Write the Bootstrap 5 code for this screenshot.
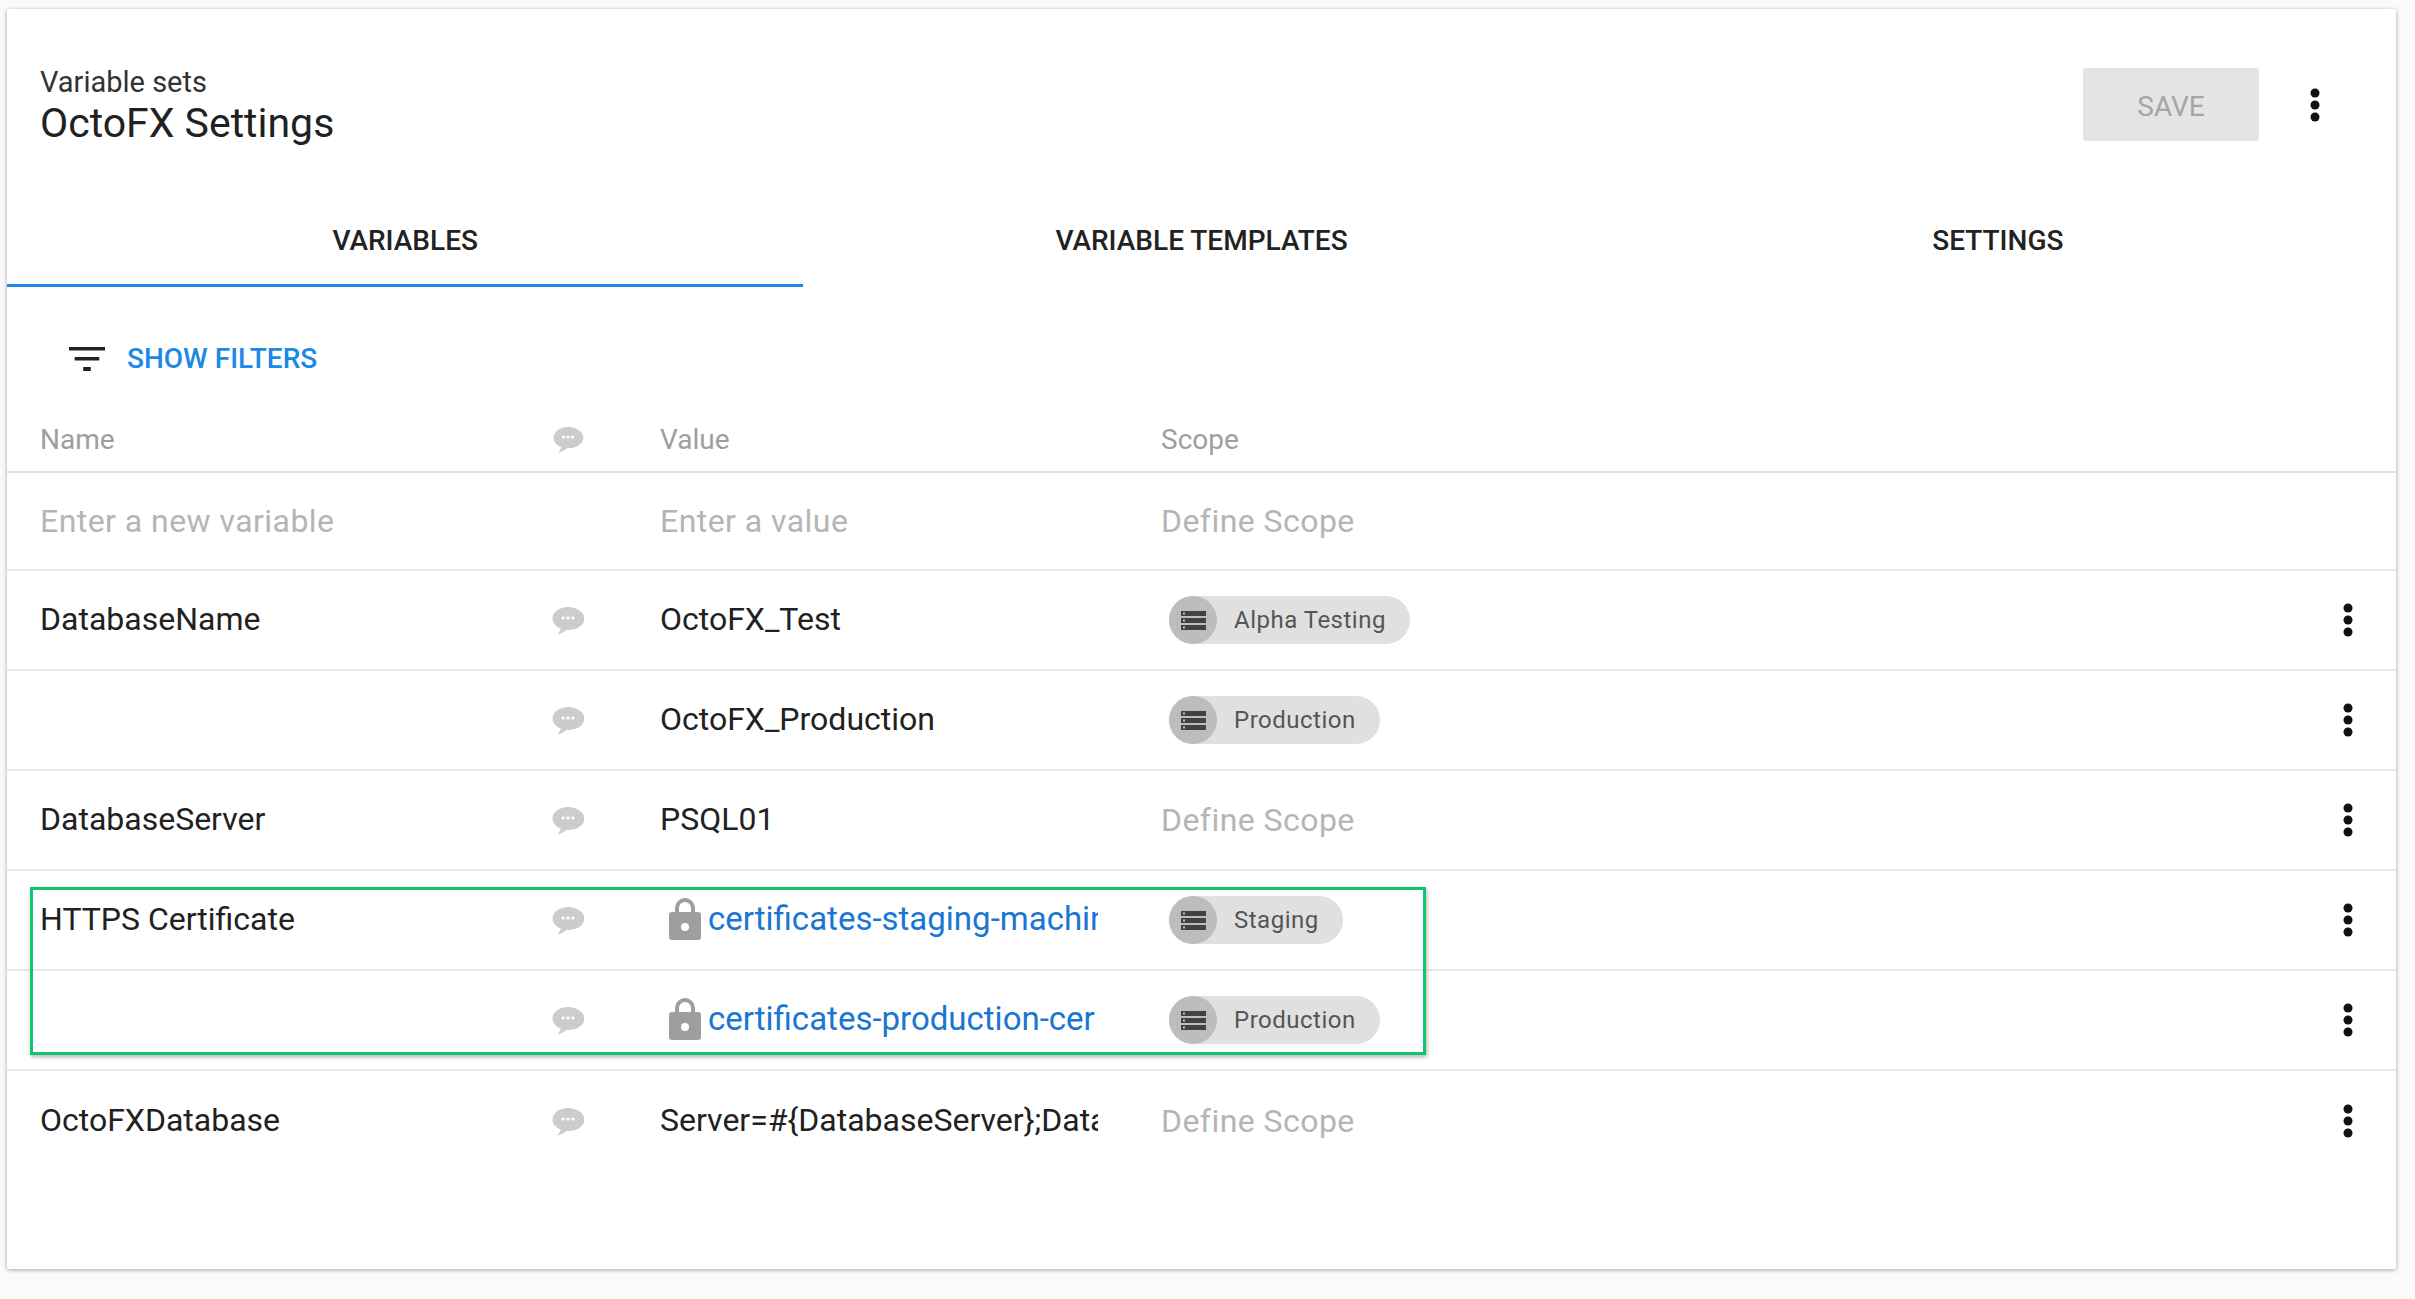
<!doctype html>
<html lang="en"><head><meta charset="utf-8"><title>OctoFX Settings</title>
<link href="https://cdn.jsdelivr.net/npm/bootstrap@5.3.0/dist/css/bootstrap.min.css" rel="stylesheet">
<style>
html,body{height:100%}
body{background:#fafafa;font-family:Roboto,"Liberation Sans",sans-serif;color:#212121;padding:9px 19px 30px 7px;overflow:hidden}
.vs-panel{position:relative;background:#fff;height:1260px;box-shadow:0 1px 4px rgba(0,0,0,.35);border-radius:2px}
.vs-head{height:198px;padding:55px 0 0 33px}
.vs-crumb{font-size:29px;line-height:36px;color:#333}
.vs-title{font-size:41px;line-height:46px;color:#212121}
.vs-save{width:176px;height:73px;margin-top:4px;padding-top:10px;background:#e4e4e4;border:0;border-radius:3px;color:#a5a5a5;font-size:28px;opacity:1}
.vs-save:disabled{background:#e4e4e4;color:#a5a5a5;opacity:1}
.vs-kebab{fill:#111;display:block}
.vs-headmenu{margin:0 69px 0 44px;width:24px}
.vs-tab{height:80px;padding-bottom:9px;color:#222;font-size:28px;font-weight:500;display:flex;align-items:center;justify-content:center;text-decoration:none;border-bottom:3px solid transparent;flex:1 1 0}
.vs-tab.on{border-bottom-color:#1e88e5}
.vs-filter{height:115px;padding:51px 0 0 62px;gap:22px}
.vs-filter span{color:#1e88e5;font-size:28px;line-height:42px;font-weight:500}
.vs-row{height:100px;border-bottom:2px solid #e8e8e8;font-size:32px;line-height:40px}
.vs-row.hd{height:71px;padding-top:7px;font-size:28px;color:#9e9e9e;border-bottom-color:#e0e0e0}
.vs-row.new{height:98px}
.vs-row:not(.hd):not(.new) .c-name,.vs-row:not(.hd):not(.new) .c-val{padding-bottom:2px}
.vs-row:not(.hd) .c-note{padding-top:2px}
.c-name{width:545px;padding-left:33px;flex:none}
.c-note{width:108px;flex:none}
.c-val{width:438px;flex:none;overflow:hidden;white-space:nowrap}
.c-scope{margin-left:63px;flex:1 1 auto}
.c-menu{width:24px;flex:none;margin-right:36px}
.ghost{color:#b5b5b5;letter-spacing:.45px}
.vs-row.last{border-bottom:0}
.vs-link{color:#1976d2;text-decoration:none;font-size:33px}
.vs-lock{flex:none;margin:0 7px 0 9px;display:block}
.vs-chip{display:inline-flex;align-items:center;height:48px;border-radius:24px;background:#e0e0e0;margin-left:8px;padding-right:24px;font-size:24px;color:#555;letter-spacing:.5px}
.vs-chip i{width:48px;height:48px;border-radius:50%;background:#bdbdbd;display:flex;align-items:center;justify-content:center;margin-right:17px}
.vs-mark{position:absolute;left:23px;top:878px;width:1396px;height:168px;border:3px solid #12c46f;box-shadow:1px 2px 4px rgba(0,0,0,.3);pointer-events:none}
</style></head>
<body>
<svg width="0" height="0" class="d-block" style="position:absolute">
<defs>
<symbol id="i-note" viewBox="0 0 32 28"><path fill="#ccc" d="M16 0C7.5 0 .5 5 .5 11.500c0 4.600 3.500 8.300 8.300 10.100-.6 2.300-2 4.300-3.300 5.900 3.400-.4 7-2.500 9.200-4.700.7.100 1.500.1 2.300.1 8.500 0 15.500-5 15.500-11.500S24.500 0 16 0z"/><g fill="#fff"><rect x="9.500" y="9.500" width="3" height="3" rx="1"/><rect x="14.500" y="9.500" width="3" height="3" rx="1"/><rect x="19.500" y="9.500" width="3" height="3" rx="1"/></g></symbol>
<symbol id="i-lock" viewBox="0 0 32 42"><path fill="none" stroke="#9e9e9e" stroke-width="4" d="M8 16V10a8 8 0 0 1 16 0v6"/><rect y="14" width="32" height="28" rx="3" fill="#9e9e9e"/><circle cx="16" cy="29" r="4" fill="#fff"/></symbol>
<symbol id="i-srv" viewBox="0 0 25 19"><path fill="#424242" fill-rule="evenodd" d="M0 0h25v5H0zM2 1.500v2h2v-2zM0 7h25v5H0zM2 8.500v2h2v-2zM0 14h25v5H0zM2 15.500v2h2v-2z"/></symbol>
<symbol id="i-dots" viewBox="0 0 24 36"><circle cx="12" cy="6" r="4.500"/><circle cx="12" cy="18" r="4.500"/><circle cx="12" cy="30" r="4.500"/></symbol>
</defs></svg>

<main class="vs-panel">
  <header class="vs-head d-flex align-items-start">
    <div class="flex-grow-1">
      <div class="vs-crumb">Variable sets</div>
      <div class="vs-title">OctoFX Settings</div>
    </div>
    <button class="btn vs-save" disabled>SAVE</button>
    <div class="vs-headmenu"><svg class="vs-kebab" width="24" height="36" style="margin-top:23px"><use href="#i-dots"/></svg></div>
  </header>

  <nav class="nav d-flex">
    <a class="vs-tab on" href="#">VARIABLES</a>
    <a class="vs-tab" href="#">VARIABLE TEMPLATES</a>
    <a class="vs-tab" href="#">SETTINGS</a>
  </nav>

  <div class="vs-filter d-flex align-items-start">
    <svg class="mt-2" width="36" height="26" viewBox="0 0 38 26" preserveAspectRatio="none"><path fill="#222" d="M0 1h38v3.500H0zM6 11h26v3.500H6zM15 21h8v4h-8z"/></svg>
    <span>SHOW FILTERS</span>
  </div>

  <div class="vs-row hd d-flex align-items-center">
    <div class="c-name">Name</div>
    <div class="c-note"><svg class="d-block" width="32" height="26"><use href="#i-note"/></svg></div>
    <div class="c-val">Value</div>
    <div class="c-scope">Scope</div>
  </div>
  <div class="vs-row new d-flex align-items-center">
    <div class="c-name ghost">Enter a new variable</div>
    <div class="c-note"></div>
    <div class="c-val ghost">Enter a value</div>
    <div class="c-scope ghost">Define Scope</div>
  </div>
  <div class="vs-row d-flex align-items-center">
    <div class="c-name">DatabaseName</div>
    <div class="c-note"><svg class="d-block" width="32" height="28"><use href="#i-note"/></svg></div>
    <div class="c-val">OctoFX_Test</div>
    <div class="c-scope"><span class="vs-chip"><i><svg width="25" height="19"><use href="#i-srv"/></svg></i>Alpha Testing</span></div>
    <div class="c-menu"><svg class="vs-kebab" width="24" height="36"><use href="#i-dots"/></svg></div>
  </div>
  <div class="vs-row d-flex align-items-center">
    <div class="c-name"></div>
    <div class="c-note"><svg class="d-block" width="32" height="28"><use href="#i-note"/></svg></div>
    <div class="c-val">OctoFX_Production</div>
    <div class="c-scope"><span class="vs-chip"><i><svg width="25" height="19"><use href="#i-srv"/></svg></i>Production</span></div>
    <div class="c-menu"><svg class="vs-kebab" width="24" height="36"><use href="#i-dots"/></svg></div>
  </div>
  <div class="vs-row d-flex align-items-center">
    <div class="c-name">DatabaseServer</div>
    <div class="c-note"><svg class="d-block" width="32" height="28"><use href="#i-note"/></svg></div>
    <div class="c-val">PSQL01</div>
    <div class="c-scope ghost">Define Scope</div>
    <div class="c-menu"><svg class="vs-kebab" width="24" height="36"><use href="#i-dots"/></svg></div>
  </div>
  <div class="vs-row d-flex align-items-center">
    <div class="c-name">HTTPS Certificate</div>
    <div class="c-note"><svg class="d-block" width="32" height="28"><use href="#i-note"/></svg></div>
    <div class="c-val d-flex align-items-center"><svg class="vs-lock" width="32" height="42"><use href="#i-lock"/></svg><a class="vs-link" href="#">certificates-staging-machin</a></div>
    <div class="c-scope"><span class="vs-chip"><i><svg width="25" height="19"><use href="#i-srv"/></svg></i>Staging</span></div>
    <div class="c-menu"><svg class="vs-kebab" width="24" height="36"><use href="#i-dots"/></svg></div>
  </div>
  <div class="vs-row d-flex align-items-center">
    <div class="c-name"></div>
    <div class="c-note"><svg class="d-block" width="32" height="28"><use href="#i-note"/></svg></div>
    <div class="c-val d-flex align-items-center"><svg class="vs-lock" width="32" height="42"><use href="#i-lock"/></svg><a class="vs-link" href="#">certificates-production-cer</a></div>
    <div class="c-scope"><span class="vs-chip"><i><svg width="25" height="19"><use href="#i-srv"/></svg></i>Production</span></div>
    <div class="c-menu"><svg class="vs-kebab" width="24" height="36"><use href="#i-dots"/></svg></div>
  </div>
  <div class="vs-row last d-flex align-items-center">
    <div class="c-name">OctoFXDatabase</div>
    <div class="c-note"><svg class="d-block" width="32" height="28"><use href="#i-note"/></svg></div>
    <div class="c-val">Server=#{DatabaseServer};Data</div>
    <div class="c-scope ghost">Define Scope</div>
    <div class="c-menu"><svg class="vs-kebab" width="24" height="36"><use href="#i-dots"/></svg></div>
  </div>
  <div class="vs-mark"></div>
</main>
<script src="https://cdn.jsdelivr.net/npm/bootstrap@5.3.0/dist/js/bootstrap.bundle.min.js"></script>
</body></html>
